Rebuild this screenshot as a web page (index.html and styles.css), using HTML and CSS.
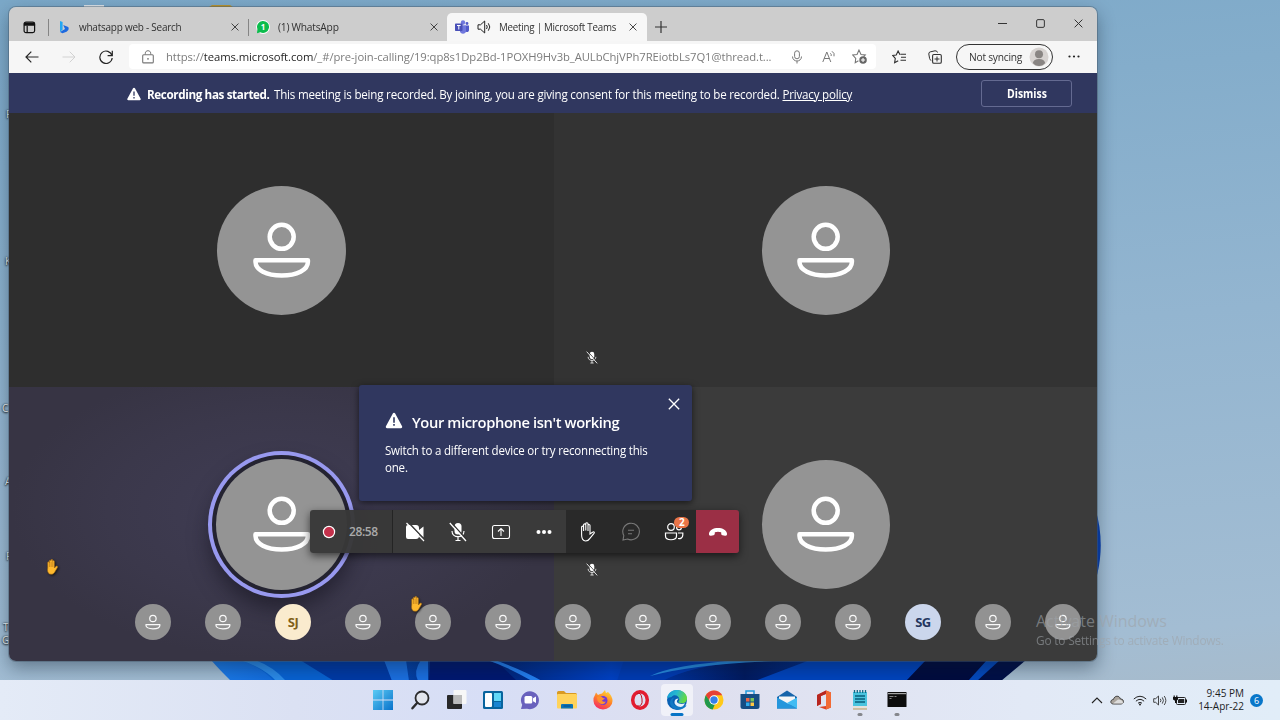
FILE: index.html
```html
<!DOCTYPE html>
<html lang="en">
<head>
<meta charset="utf-8">
<title>Meeting | Microsoft Teams</title>
<link rel="stylesheet" href="styles.css">
</head>
<body>
<svg class="defs" width="0" height="0" aria-hidden="true">
  <defs>
    <symbol id="person" viewBox="0 0 60 60"><g fill="none" stroke="#fff" stroke-width="4.500"><circle cx="29.700" cy="16.800" r="12"/><path d="M3.500 40.200H55.900V42C55.900 50 45 55.500 29.700 55.500S3.500 50 3.500 42Z" stroke-linejoin="round"/></g></symbol>
    <symbol id="warn" viewBox="0 0 16 16"><path fill="#fff" d="M8 .8c.5 0 .9.200 1.100.7l6.500 12c.4.800-.1 1.700-1.100 1.700h-13c-1 0-1.500-.9-1.100-1.700l6.500-12c.2-.5.600-.7 1.100-.7z"/><path d="M8 5v5M8 11.300v1.700" stroke="#30375f" stroke-width="1.500"/></symbol>
    <symbol id="close" viewBox="0 0 10 10"><path d="M.7.7l8.600 8.600M9.300.7L.7 9.300" fill="none" stroke="currentColor" stroke-width="1.100"/></symbol>
    <symbol id="mute" viewBox="0 0 18 20"><rect x="5.500" y="1" width="7" height="11.500" rx="3.500" fill="#fff"/><path d="M3 9c0 7.500 12 7.500 12 0M9 14.800V18.500M6.500 18.500h5" fill="none" stroke="#fff" stroke-width="1.200"/><path d="M1.800 0L18 18" stroke="#333" stroke-width="1.300"/><path d="M.8 1L17 19" stroke="#fff" stroke-width="1.300"/></symbol>
    <symbol id="hand" viewBox="0 0 14 16"><path d="M3.200 9V3.600c0-1.200 1.500-1.200 1.600 0V2c0-1.300 1.700-1.300 1.700 0V1.200c0-1.300 1.700-1.300 1.700 0V2.400c0-1.200 1.700-1.200 1.700 0V9l1.600-1.700c.9-.8 2.100.1 1.500 1.100L10.300 13c-1 1.700-2 2.300-3.700 2.300-2.500 0-3.600-1.900-3.600-4.500z" fill="#ffb92e" stroke="#9b6519" stroke-width=".6"/><path d="M4.900 3v5M6.600 2.600V8M8.300 3v5" stroke="#a96b15" stroke-width=".6"/></symbol>
    <linearGradient id="petal" x1="0" x2="1"><stop offset="0" stop-color="#1c7be8"/><stop offset=".17" stop-color="#0556cd"/><stop offset=".3" stop-color="#02216e"/><stop offset=".45" stop-color="#0041c4"/><stop offset=".6" stop-color="#021a5f"/><stop offset=".78" stop-color="#0145c2"/><stop offset="1" stop-color="#0a3fae"/></linearGradient>
    <linearGradient id="win" x2="1" y2="1"><stop stop-color="#5ccbf4"/><stop offset="1" stop-color="#0872cb"/></linearGradient>
    <linearGradient id="edgeg" x2="1" y2=".3"><stop stop-color="#1499d8"/><stop offset=".5" stop-color="#27b8cf"/><stop offset="1" stop-color="#62d947"/></linearGradient>
    <linearGradient id="fox" x1=".8" y1="0" x2=".3" y2="1"><stop stop-color="#ffe137"/><stop offset=".5" stop-color="#ff8428"/><stop offset="1" stop-color="#f52965"/></linearGradient>
  </defs>
</svg>

<main class="desktop">
  <svg class="wallpaper" viewBox="0 0 1280 720" aria-hidden="true">
    <path d="M211 660C217 667 224 674 231 681H1000L1024 661 1088 600C1105 565 1105 525 1088 490L600 400Z" fill="url(#petal)"/>
    <path d="M240 660C255 665 266 672 274 681h120L384 660Z" fill="#0862d2"/>
    <path d="M300 660h84l10 21h-60z" fill="#013aa6"/>
    <path d="M240 660q24 8 36 21h10q-12-14-31-21z" fill="#2b8bea"/>
    <path d="M384 660l8 21h17l-3-21zM421 660q-8 11-3 21h10v-21z" fill="#1b6fe0"/>
    <path d="M430 660h65l22 21h-88z" fill="#011870"/><path d="M495 660q30 11 47 21h-10q-24-14-45-21z" fill="#247ff1"/>
    <path d="M624 660h120v2q-50 3-82 19h-45z" fill="#003bb2"/><path d="M650 676q50-14 157-16h-66q-70 5-91 16z" fill="#278be0"/>
    <path d="M810 660l-55 21h150l20-21z" fill="#0144be"/><path d="M926 660l-20 21h68l14-21z" fill="#010b3e"/>
    <path d="M987 660l-19 21h9l23-21z" fill="#0449bd"/><path d="M1000 660l-23 21h24l25-21z" fill="#010f47"/>
    <path d="M84 5h20v5H84z" fill="#dce3e8"/><path d="M209 10V7l3-2h18l3 2v3z" fill="#b99431"/>
  </svg>
  <span class="label l1">F</span><span class="label l2">K</span><span class="label l3">C</span><span class="label l4">A</span><span class="label l5">F</span><span class="label l6">Tu</span><span class="label l7">G</span>

  <section class="window">
    <header class="tabs">
      <svg class="workspace" viewBox="0 0 14 14"><rect x="1.200" y="1.200" width="11.300" height="11.300" rx="2" fill="none" stroke="#111" stroke-width="1.300"/><path d="M1 2h12v3H1z" fill="#111"/><path d="M4.500 5v8" stroke="#111" stroke-width="1.300"/></svg>
      <i class="divider"></i>
      <div class="tab first">
        <svg class="favicon" viewBox="0 0 14 14"><path d="M3 1l2.600 1v7.600L3 12z" fill="#22a7f2"/><path d="M6.200 5l5 2c1.300 2-.2 4-2.300 5.100L5.500 13.300 3 12l5-3z" fill="#1d69df"/></svg>
        <span class="tab-title t1">whatsapp web - Search</span><svg class="x"><use href="#close"/></svg>
      </div>
      <i class="divider"></i>
      <div class="tab second">
        <svg class="favicon wa" viewBox="0 0 14 14"><circle cx="7" cy="7" r="6.900" fill="#fff"/><path d="M1 13.300L1.400 9a6 6 0 1 1 3 3.300z" fill="#0dbc4d"/><text x="7" y="10" text-anchor="middle" fill="#fff">1</text></svg>
        <span class="tab-title t2">(1) WhatsApp</span><svg class="x"><use href="#close"/></svg>
      </div>
      <div class="tab active">
        <svg class="favicon" viewBox="0 0 14 14"><circle cx="8" cy="2.500" r="2.200" fill="#7078dd"/><circle cx="12" cy="3.500" r="1.400" fill="#5059c9"/><path d="M5 5.200h6v6c0 3.300-6 3.300-6 0z" fill="#7078dd"/><path d="M11 5.600h3V10c0 2-2 2.500-3 1.800z" fill="#5059c9"/><rect y="3.500" width="7.500" height="7.500" rx=".7" fill="#4950b8"/><path d="M2 5.500h3.600M3.800 5.500v4" stroke="#fff"/></svg>
        <svg class="sound" viewBox="0 0 14 14"><path d="M1 4.800h2.500L7.700 1v12L3.500 9.200H1z" fill="none" stroke="#222"/><path d="M9.500 5q1.500 2 0 4M11.300 3.300q3 3.700 0 7.400" fill="none" stroke="#222"/></svg>
        <span class="tab-title t3">Meeting | Microsoft Teams</span><svg class="x"><use href="#close"/></svg>
      </div>
      <svg class="plus" viewBox="0 0 12 12"><path d="M6 0v12M0 6h12" stroke="#333" stroke-width="1.200"/></svg>
      <div class="window-actions">
        <svg viewBox="0 0 10 10"><path d="M0 5h10" stroke="#222"/></svg>
        <svg viewBox="0 0 10 10"><rect x=".7" y=".7" width="8.600" height="8.600" rx="1.400" fill="none" stroke="#222"/></svg>
        <svg><use href="#close"/></svg>
      </div>
    </header>

    <nav class="toolbar">
      <svg class="back" viewBox="0 0 14 12"><path d="M13.500 6H1M6.300.7L1 6l5.300 5.300" fill="none" stroke="#282828" stroke-width="1.200"/></svg>
      <svg class="forward" viewBox="0 0 14 12"><path d="M.5 6H13M7.700.7L13 6l-5.300 5.300" fill="none" stroke="#d2d2d2"/></svg>
      <svg class="reload" viewBox="0 0 14 14"><path d="M13 5.500A6.200 6.200 0 1 0 13.200 8M13.300 .8v4.800H8.600" fill="none" stroke="#252525" stroke-width="1.200"/></svg>
      <div class="address">
        <svg class="lock" viewBox="0 0 12 14"><rect x=".7" y="4.700" width="10.600" height="8.200" rx="1" fill="none" stroke="#777" stroke-width="1.100"/><path d="M3.300 4.500V3.200c0-3.300 5.400-3.300 5.400 0v1.300" fill="none" stroke="#777"/><circle cx="6" cy="8.800" r=".9" fill="#777"/></svg>
        <span class="url">https://<b>teams.microsoft.com</b>/_#/pre-join-calling/19:qp8s1Dp2Bd-1POXH9Hv3b_AULbChjVPh7REiotbLs7Q1@thread.t...</span>
        <svg class="mic" viewBox="0 0 12 14"><rect x="3.600" y=".8" width="4.800" height="8" rx="2.400" fill="none" stroke="#777"/><path d="M1.500 6.500c0 6 9 6 9 0M6 11v2.500" fill="none" stroke="#777"/></svg>
        <svg class="read" viewBox="0 0 14 14"><path d="M.8 12L4.800 2l4 10M2.200 8.500h5.200M8.400 3.300q1.300 1 .7 2.700M10 1.300q3 1.900 2 5" fill="none" stroke="#777"/></svg>
        <svg class="favorite" viewBox="0 0 14 14"><path d="M6 11l-3 1.800.5-4L.7 5.600l4-.5L6.500 1l1.900 4.100 4 .5-1.500 1.500" fill="none" stroke="#777"/><circle cx="10.300" cy="10.200" r="3.500" fill="#666"/><path d="M8.400 10.200h3.800M10.300 8.300v3.800" stroke="#fff"/></svg>
      </div>
      <svg class="starlist" viewBox="0 0 14 14"><path d="M8 4.800L6.100 1 4.200 5l-3.500.4 2.600 3-.7 4.400 3.600-2M8.500 4.300H14M9 7.300h5M8.500 10.300H14" fill="none" stroke="#303030" stroke-width="1.100"/></svg>
      <svg class="collections" viewBox="0 0 14 14"><rect x="4.600" y="4.500" width="8.700" height="8.700" rx="1.300" fill="none" stroke="#303030" stroke-width="1.100"/><path d="M9 6.500v5M6.500 9h5M3.300 10.500Q1.800 10 1.600 8.500L.8 4Q.6 2.300 2.200 1.900L7 .8Q9 .5 9.500 2.500" fill="none" stroke="#303030"/></svg>
      <div class="profile"><span>Not syncing</span><svg viewBox="0 0 20 20"><circle cx="10" cy="10" r="9.500" fill="#d7d3d1"/><circle cx="10" cy="7.300" r="4" fill="#898583"/><path d="M3.800 16q1-4 6.200-4t6.200 4q-2.300 3-6.200 3t-6.200-3z" fill="#898583"/></svg></div>
      <svg class="more" viewBox="0 0 12 3"><g fill="#222"><circle cx="1.500" cy="1.500" r="1.100"/><circle cx="6" cy="1.500" r="1.100"/><circle cx="10.500" cy="1.500" r="1.100"/></g></svg>
    </nav>

    <div class="banner"><svg class="warning"><use href="#warn"/></svg><p><strong>Recording has started.</strong><span class="notice">This meeting is being recorded. By joining, you are giving consent for this meeting to be recorded. <u>Privacy policy</u></span></p><button class="dismiss"><span>Dismiss</span></button></div>

    <div class="stage">
      <div class="tile dark"><div class="avatar"><svg><use href="#person"/></svg></div></div>
      <div class="tile upper"><div class="avatar"><svg><use href="#person"/></svg></div><svg class="tile-muted"><use href="#mute"/></svg></div>
      <div class="tile speaking"><div class="avatar ring"><svg><use href="#person"/></svg></div><svg class="raised"><use href="#hand"/></svg></div>
      <div class="tile gray"><div class="avatar"><svg><use href="#person"/></svg></div><svg class="tile-muted lower"><use href="#mute"/></svg></div>
      <div class="participants">
        <div class="mini"><svg><use href="#person"/></svg></div><div class="mini"><svg><use href="#person"/></svg></div><div class="mini cream">SJ</div><div class="mini"><svg><use href="#person"/></svg></div><div class="mini"><svg><use href="#person"/></svg><svg class="mini-hand"><use href="#hand"/></svg></div><div class="mini"><svg><use href="#person"/></svg></div><div class="mini"><svg><use href="#person"/></svg></div><div class="mini"><svg><use href="#person"/></svg></div><div class="mini"><svg><use href="#person"/></svg></div><div class="mini"><svg><use href="#person"/></svg></div><div class="mini"><svg><use href="#person"/></svg></div><div class="mini blue">SG</div><div class="mini"><svg><use href="#person"/></svg></div><div class="mini"><svg><use href="#person"/></svg></div>
      </div>
      <aside class="popup"><div class="popup-head"><svg class="warning"><use href="#warn"/></svg><h1>Your microphone isn't working</h1></div><p><span>Switch to a different device or try reconnecting this</span><br>one.</p><svg class="popup-close"><use href="#close"/></svg></aside>
      <div class="callbar">
        <div class="recording"><svg viewBox="0 0 14 14"><circle cx="7" cy="7" r="5.600" fill="#c4314b" stroke="#fff" stroke-width="1.200"/></svg><span>28:58</span></div>
        <div class="devices">
          <svg viewBox="0 0 20 20"><path d="M3 3h8a3 3 0 0 1 3 3v2l4.500-3.500v11L14 12v2a3 3 0 0 1-3 3H3a2 2 0 0 1-2-2V5a2 2 0 0 1 2-2z" fill="#fff"/><path d="M3 0l17 18" stroke="#3b3b3b" stroke-width="1.500"/><path d="M1.500 1l17.500 18" stroke="#fff" stroke-width="1.200"/></svg>
          <svg><use href="#mute"/></svg>
          <svg viewBox="0 0 20 20"><rect x="1.500" y="3.500" width="17" height="13" rx="2" fill="none" stroke="#fff" stroke-width="1.100"/><path d="M10 14V6.500M7 9.500l3-3 3 3" fill="none" stroke="#fff" stroke-width="1.100"/></svg>
          <svg viewBox="0 0 20 20"><g fill="#fff"><circle cx="4.500" cy="10" r="2"/><circle cx="10" cy="10" r="2"/><circle cx="15.500" cy="10" r="2"/></g></svg>
        </div>
        <div class="social">
          <svg class="raise" viewBox="0 0 20 20"><path d="M3.600 11V5.200c0-1.500 2-1.500 2 0V9 3c0-1.500 2.200-1.500 2.200 0v5.500-6.700c0-1.500 2.200-1.500 2.200 0V9 3.600c0-1.500 2-1.500 2 0V12l2.500-1.800c1-.8 2.500-.2 1.500 1.200l-4.300 5.200c-1.200 2-2.300 2.400-4 2.400-3 0-4.100-3-4.100-6z" fill="none" stroke="#fff" stroke-width="1.100"/></svg>
          <svg viewBox="0 0 20 20"><path d="M2 18l.8-4.500A8.300 8.300 0 1 1 6.500 17zM7 8.300h6M7 11.700h4" fill="none" stroke="#777" stroke-width="1.100"/></svg>
          <div class="people"><svg viewBox="0 0 20 20"><g fill="none" stroke="#fff" stroke-width="1.200"><circle cx="7" cy="5" r="3.300"/><circle cx="15" cy="5.500" r="2.400"/><path d="M1.500 11h11v3c0 5-11 5-11 0zM14 11h4.800v2c0 3.200-2.600 4-4.800 3.500"/></g></svg><b>2</b></div>
        </div>
        <div class="leave"><svg viewBox="0 0 20 20"><path d="M1 11.500C1.500 8 5.500 6 10 6s8.500 2 9 5.500c.2 1.700-.6 2.500-2 2.200l-2.500-.5c-.9-.2-1.300-.8-1.300-2V10.300q-3.200-1-6.400 0v1c0 1.200-.4 1.700-1.300 1.900l-2.500.5c-1.400.3-2.200-.6-2-2.200z" fill="#fff"/></svg></div>
      </div>
    </div>
  </section>

  <div class="activation"><div>Activate Windows</div><p>Go to Settings to activate Windows.</p></div>

  <footer class="taskbar">
    <div class="apps">
      <div class="app"><svg viewBox="0 0 20 20"><path d="M0 0h9.600v9.600H0zM10.400 0H20v9.600h-9.600zM0 10.400h9.600V20H0zM10.400 10.400H20V20h-9.600z" fill="url(#win)"/></svg></div>
      <div class="app"><svg viewBox="0 0 20 20"><circle cx="12" cy="8" r="6.500" fill="#e3e6ee" stroke="#2b2b2d" stroke-width="1.800"/><path d="M7.300 12.800L2.400 18.300" stroke="#2b2b2d" stroke-width="2.400" stroke-linecap="round"/></svg></div>
      <div class="app"><svg viewBox="0 0 20 20"><rect x="0" y="5" width="15" height="14" rx="1" fill="#282828"/><rect x="6.500" y="0" width="13" height="14" rx="1" fill="#f7f7f7"/><path d="M6.500 5H15v9H6.500z" fill="#bbb"/></svg></div>
      <div class="app"><svg viewBox="0 0 20 20"><rect y="1" width="20" height="18" rx="1.500" fill="#08649e"/><rect x="2" y="3" width="7" height="14" rx="1" fill="#fff"/><path d="M11 3h7v8h-7z" fill="#61d7f7"/><path d="M11 12h7v5h-7z" fill="#1884d1"/></svg></div>
      <div class="app"><svg viewBox="0 0 20 20"><path d="M1 19l1.200-4.200A9 9 0 1 1 7 18.700z" fill="#6961bd"/><rect x="4.500" y="6" width="7.800" height="7.500" rx="1.500" fill="#fff"/><path d="M13 8.200l3-1.700v6.500l-3-1.700z" fill="#fff"/></svg></div>
      <div class="app"><svg viewBox="0 0 20 20"><path d="M0 2.500Q0 1 1.500 1H7l2 2h9.500Q20 3 20 4.500V8H0z" fill="#d99a22"/><rect y="4" width="20" height="14.500" rx="1" fill="#ffd35b"/><path d="M4 18.500V15q0-1 1-1h10q1 0 1 1v3.500z" fill="#0b73b5"/><path d="M6.500 16h7" stroke="#064e86"/></svg></div>
      <div class="app"><svg viewBox="0 0 20 20"><path d="M2 5L3 2.500 5 5q2-1.500 4-1.500L12 0l1 3 2-1q4.500 4 4.500 9A9.500 8.500 0 0 1 .5 11Q.3 7 2 5z" fill="url(#fox)"/><circle cx="10" cy="10.500" r="4.500" fill="#743bd5"/><path d="M4 7q4-2 6 1l2 .5-3 2q1 2 4 1-2 4-6 2-3-2-3-6.500z" fill="#ff912d"/></svg></div>
      <div class="app"><svg viewBox="0 0 20 20"><ellipse cx="10" cy="10" rx="7.300" ry="8.200" fill="none" stroke="#e21c30" stroke-width="3.500"/><path d="M7 4q4-3 5 5t-5 7" fill="none" stroke="#bc1423" stroke-width="1"/></svg></div>
      <div class="app selected"><svg viewBox="0 0 20 20"><circle cx="10" cy="10" r="10" fill="#0961b4"/><path d="M0 8C2-3 19-2 20 8c.3 4-3 6-7 5-2-.3-2-1-1-2C14 6 7 3 4.500 7z" fill="url(#edgeg)"/><path d="M7.500 7.500c-5 4 1 12 9.500 8.200q2-1 2.500 0C16 20 10 21 6 18 1 14 3 8 7.500 7.500z" fill="#1379c5"/><path d="M11.500 8.500Q8 12 12 13.500q3 1 6-.3-2 5-7 3.200Q6 14.500 8 10q1-1.600 3.500-1.500z" fill="#e7f2fb"/></svg><i></i></div>
      <div class="app"><svg viewBox="0 0 20 20"><circle cx="10" cy="10" r="9.500" fill="#ffc919"/><path d="M1.800 5.200A9.500 9.500 0 0 1 18.200 5.200H10L6 12z" fill="#e64035"/><path d="M1.800 5.200L7 13l4 1-2.300 5.400A9.500 9.500 0 0 1 1.800 5.200z" fill="#21984c"/><circle cx="10" cy="10" r="4.700" fill="#fff"/><circle cx="10" cy="10" r="3.700" fill="#367fe7"/></svg></div>
      <div class="app"><svg viewBox="0 0 20 20"><path d="M6 5V1h8v4" fill="none" stroke="#2599dc" stroke-width="1.500"/><path d="M.5 4h19v12.500q0 2.500-2.500 2.500H3q-2.500 0-2.500-2.500z" fill="#164d83"/><path d="M6 8h3.500v3.500H6z" fill="#ec6548"/><path d="M10.500 8H14v3.500h-3.500z" fill="#7ac356"/><path d="M6 12.500h3.500V16H6z" fill="#31aceb"/><path d="M10.500 12.500H14V16h-3.500z" fill="#ffc843"/></svg></div>
      <div class="app"><svg viewBox="0 0 20 20"><path d="M0 7L10 .5 20 7v11.500H0z" fill="#1765aa"/><path d="M2 6.500h16v5l-8 4-8-4z" fill="#f6f6f6"/><path d="M0 7.500l20 11H0z" fill="#2496dc"/><path d="M20 7.500L10 13l10 5.500z" fill="#42bcf3"/></svg></div>
      <div class="app"><svg viewBox="0 0 20 20"><path d="M3 5L12 .5l5 2v15l-5 2L5 17l7-1V4L7 6v8l-4 2z" fill="#dc4326"/><path d="M12 .5l5 2v15l-5 2z" fill="#f26a34"/><path d="M3 5l9-4.500V4L7 6v8l-4 2z" fill="#b72620"/></svg></div>
      <div class="app"><svg viewBox="0 0 20 20"><path d="M3 2h14v16.500H3z" fill="#49c4df"/><path d="M3 16h14v3H3z" fill="#e3e2dc"/><path d="M5 6h10M5 9h10M5 12h10" stroke="#075d7c" stroke-width="1.300"/><path d="M4.500 0v3M7.300 0v3M10 0v3M12.700 0v3M15.500 0v3" stroke="#116b87" stroke-width="1.300"/><path d="M3 19h14" stroke="#b59b62"/></svg><i></i></div>
      <div class="app"><svg viewBox="0 0 20 20"><rect x=".5" y="2" width="19" height="15" rx=".5" fill="#0d0d0d"/><path d="M1 3h18v1.200H1z" fill="#a4a4a4"/><path d="M2.500 6.500h4M7.500 6.500h2M2.500 8.500h2" stroke="#888" fill="none"/></svg><i></i></div>
    </div>
    <div class="tray">
      <svg class="chevron" viewBox="0 0 12 7"><path d="M1 6l5-5 5 5" fill="none" stroke="#222" stroke-width="1.100"/></svg>
      <svg class="cloud" viewBox="0 0 14 10"><path d="M3.500 9C-.3 9 .2 4.500 3.400 4.500 4.500.2 9.500.2 10.400 4c4-.3 4 5 .6 5z" fill="#aaa49d" stroke="#333" stroke-width=".9"/><path d="M3 8.500l5-4q5 0 5 4z" fill="#ddd"/></svg>
      <svg class="wifi" viewBox="0 0 14 11"><path d="M.8 4q6.200-5.500 12.400 0M2.900 6.200q4.100-3.700 8.200 0M5 8.200q2-1.600 4 0" fill="none" stroke="#222"/><circle cx="7" cy="9.600" r="1" fill="#222"/></svg>
      <svg class="volume" viewBox="0 0 14 11"><path d="M.7 3.700h2L5.500 1v9L2.700 7.300h-2zM7.300 3.800q1.300 1.700 0 3.400M9.300 2.400q2.300 3.100 0 6.200M11.200 1q3.300 4.500 0 9" fill="none" stroke="#333" stroke-width=".9"/></svg>
      <svg class="battery" viewBox="0 0 14 11"><rect x="3.500" y="2.500" width="9" height="7" rx="1" fill="none" stroke="#222"/><path d="M6 4h5.200v4H5V5z" fill="#222"/><path d="M0 2h5v2.500L3.300 5.800V8H2V5.800L0 4.500zM.6.500h1.200V2H.6zM3.200.5h1.200V2H3.200zM13 4.500h1v3h-1z" fill="#111"/></svg>
      <div class="clock"><time>9:45 PM</time><time>14-Apr-22</time></div><span class="notification">6</span>
    </div>
  </footer>
</main>
</body>
</html>
```
FILE: styles.css
```css
* { box-sizing: border-box; }
body { margin: 0; font-family: "Open Sans", "Noto Sans", sans-serif; font-size: 11px; overflow: hidden; }
svg { display: block; flex-shrink: 0; }
p, h1 { margin: 0; }
button { font: inherit; padding: 0; }
.defs { position: absolute; }
.desktop { position: relative; width: 1280px; height: 720px; padding: 7px 0 0 9px; overflow: hidden; background: linear-gradient(175deg, #7ba8c8 0%, #84adcb 20%, #93b5d0 50%, #a3bdd3 88%, #a9bac8 100%); }
.wallpaper { position: absolute; inset: 0; width: 1280px; height: 720px; }
.label { position: absolute; left: 6px; color: #eef3f6; font-size: 10px; line-height: 14px; text-shadow: 0 1px 2px #111, 0 0 2px #222; }
.l1 { top: 107px; } .l2 { top: 254px; left: 5px; } .l3 { top: 401px; left: 2px; } .l4 { top: 474px; left: 5px; } .l5 { top: 549px; } .l6 { top: 620px; left: 3px; } .l7 { top: 633px; left: 2px; }
.window { position: relative; display: flex; flex-direction: column; width: 1088px; height: 654px; border-radius: 7px; overflow: hidden; box-shadow: 0 0 0 1px rgba(70, 90, 108, .45), 0 7px 18px rgba(10, 25, 40, .4); }

.tabs { height: 34px; flex: none; display: flex; align-items: center; background: #cdcdcd; padding: 6px 14px 0; color: #303030; }
.workspace { width: 13px; height: 13px; }
.divider { flex: none; width: 1px; height: 17px; background: #858585; margin-left: 12px; }
.tab { display: flex; flex: none; align-items: center; height: 28px; }
.first { width: 199px; padding-left: 8px; }
.second { width: 198px; padding-left: 7px; }
.first + .divider { margin-left: 0; }
.active { width: 200px; padding-left: 8px; border-radius: 5px 5px 0 0; background: #f7f7f7; }
.favicon { width: 14px; height: 14px; }
.favicon text { font: 700 8px "Open Sans", sans-serif; }
.tab-title { flex: none; white-space: nowrap; margin: -1px 0 0 8px; transform-origin: left; letter-spacing: -.25px; }
.sound { width: 14px; height: 14px; margin-left: 8px; }
.active .tab-title { width: 118px; margin-left: 8px; }
.x { width: 8px; height: 8px; margin-left: auto; margin-right: 9px; }
.active .x { margin-right: 10px; }
.t1 { transform: scaleX(.905); } .t2 { transform: scaleX(.93); } .t3 { transform: scaleX(.885); }
.plus { width: 12px; height: 12px; margin-left: 8px; }
.window-actions { display: flex; gap: 29px; margin: -8px 0 0 auto; }
.window-actions svg { width: 9px; height: 9px; }

.toolbar { height: 32px; flex: none; display: flex; align-items: center; padding: 0 16px 1px; background: #f6f6f6; }
.back, .forward, .reload { width: 14px; height: 14px; }
.forward { margin-left: 23px; } .reload { margin-left: 23px; }
.address { display: flex; align-items: center; width: 747px; height: 25px; margin-left: 16px; padding: 0 9px 0 13px; background: #fff; border-radius: 4px; }
.lock { width: 12px; height: 14px; }
.url { flex: none; width: 608px; margin-left: 12px; color: #7c7c7c; font-size: 11.500px; letter-spacing: -.08px; white-space: nowrap; transform: scaleX(.98); transform-origin: left; }
.url b { color: #262626; font-weight: 400; }
.mic { width: 12px; height: 14px; margin-left: 17px; } .read { width: 14px; height: 14px; margin-left: 19px; } .favorite { width: 15px; height: 15px; margin-left: 16px; }
.starlist { width: 14px; height: 14px; margin-left: 16px; } .collections { width: 14px; height: 14px; margin-left: 22px; }
.profile { flex: none; width: 97px; height: 26px; margin-left: 14px; border: 1px solid #333; border-radius: 14px; display: flex; align-items: center; justify-content: space-between; padding: 0 3px 0 12px; color: #333; letter-spacing: -.25px; }
.profile span { white-space: nowrap; transform: scaleX(.93); transform-origin: left; }
.profile svg { width: 20px; height: 20px; }
.more { width: 12px; height: 3px; margin-left: 15px; }

.banner { height: 40px; flex: none; display: flex; align-items: center; padding: 2px 26px 0 118px; background: #30375f; color: #fff; font-size: 12px; }
.banner .warning { width: 14px; height: 14px; margin: -1px 6px 0 0; }
.banner p { white-space: nowrap; letter-spacing: -.2px; }
.banner strong { display: inline-block; width: 127px; font-weight: 700; letter-spacing: -.4px; transform: scaleX(.975); transform-origin: left; }
.notice { display: inline-block; transform: scaleX(.964); transform-origin: left; }
.dismiss { width: 91px; height: 27px; margin: -1px -1px 0 auto; border: 1px solid #646a91; border-radius: 3px; background: transparent; color: #fff; font-weight: 700; font-size: 12px; }
.dismiss span { display: inline-block; transform: scaleX(.87); }

.stage { position: relative; flex: 1; display: grid; grid-template: 274px 1fr / 545px 1fr; }
.tile { position: relative; display: flex; align-items: center; justify-content: center; }
.dark { background: #2e2e2e; } .upper { background: #333; } .gray { background: #3b3b3b; }
.speaking { background: radial-gradient(ellipse at 50% 45%, #403d55, #3b384b 45%, #373444 70%); }
.avatar { width: 129px; height: 129px; border-radius: 50%; display: flex; align-items: center; justify-content: center; background: #949494; }
.upper .avatar, .gray .avatar { width: 128px; margin-left: 1px; }
.avatar svg { width: 60px; height: 60px; }
.speaking .ring { width: 131px; height: 131px; box-shadow: 0 0 0 4px #242331, 0 0 0 8px #9899ef, 0 12px 20px 7px rgba(18, 17, 28, .55); }
.tile-muted { position: absolute; width: 12px; height: 13px; left: 32px; bottom: 23px; } .tile-muted.lower { bottom: 85px; }
.raised { position: absolute; left: 35px; bottom: 86px; width: 15px; height: 16px; filter: drop-shadow(1px 1px 1px #161616); }
.participants { position: absolute; left: 126px; bottom: 21px; display: flex; gap: 34px; }
.mini { position: relative; width: 36px; height: 36px; border-radius: 50%; display: grid; place-items: center; background: #929292; font-size: 13px; font-weight: 700; letter-spacing: -.5px; }
.mini > svg { width: 16px; height: 16px; opacity: .95; }
.mini .mini-hand { position: absolute; left: -7px; top: -8px; width: 15px; height: 16px; opacity: 1; filter: drop-shadow(1px 1px 1px #222); }
.cream { color: #806018; background: #faebce; } .blue { color: #24365f; background: #cbd6ec; }
.popup { position: absolute; left: 350px; top: 272px; width: 333px; height: 116px; padding: 27px 26px; background: #30375f; border-radius: 3px; color: #fff; box-shadow: 0 2px 7px rgba(0, 0, 0, .6); }
.popup-head { display: flex; align-items: center; gap: 9px; height: 20px; }
.popup .warning { width: 18px; height: 17px; margin-bottom: 3px; }
.popup h1 { font-size: 15px; line-height: 20px; font-weight: 600; letter-spacing: -.38px; white-space: nowrap; transform: scaleX(.98); transform-origin: left; }
.popup p { margin-top: 10px; font-size: 12px; line-height: 17px; letter-spacing: -.2px; white-space: nowrap; transform: scaleX(.96); transform-origin: left; }
.popup-close { position: absolute; right: 12px; top: 13px; width: 12px; height: 12px; }
.callbar { position: absolute; left: 301px; top: 397px; width: 429px; height: 43px; display: flex; overflow: hidden; border-radius: 3px; box-shadow: 0 3px 9px rgba(0, 0, 0, .6); }
.recording { width: 83px; display: flex; align-items: center; gap: 13px; padding-left: 12px; color: #aaa; background: rgba(56, 56, 56, .97); border-right: 1px solid #242424; font-size: 12px; font-weight: 600; letter-spacing: -.4px; }
.devices, .social { display: grid; align-items: center; justify-items: center; background: #3a3a3a; }
.devices { width: 173px; grid-template-columns: repeat(4, 1fr); } .social { width: 130px; grid-template-columns: repeat(3, 1fr); background: #292929; }
.callbar svg { width: 20px; height: 20px; }
.callbar .recording svg { width: 14px; height: 14px; }
.people { position: relative; } .people b { position: absolute; top: -5px; right: -5px; width: 15px; height: 11px; background: #e97548; border-radius: 6px; color: white; font-size: 10px; line-height: 11px; text-align: center; }
.leave { width: 43px; display: grid; place-items: center; background: #9b2f45; }

.activation { position: absolute; left: 1036px; top: 610px; color: rgba(158, 163, 168, .6); white-space: nowrap; font-size: 16px; line-height: 22px; letter-spacing: -.03px; }
.activation p { font-size: 12px; line-height: 17px; letter-spacing: -.2px; transform: scaleX(.99); transform-origin: left; }
.taskbar { position: absolute; inset: 680px 0 0; height: 40px; display: flex; justify-content: space-between; background: linear-gradient(90deg, #e4ebf7, #dbe1f3 23%, #d7def6 38%, #dfe0ef 56%, #e2e9f6 80%, #e1edf8); }
.apps { display: grid; grid-template-columns: repeat(15, 36.700px); margin-left: 365px; }
.app { position: relative; display: grid; place-items: center; }
.app svg { width: 20px; height: 20px; }
.selected { background: rgba(255, 255, 255, .55); border-radius: 4px; margin: 4px 2px; }
.app i { position: absolute; bottom: 4px; left: 50%; transform: translateX(-50%); width: 5px; height: 3px; border-radius: 2px; background: #85878c; }
.selected i { bottom: 0; width: 13px; background: #0874c6; }
.tray { display: flex; align-items: center; padding-right: 17px; color: #1d1d1d; }
.chevron { width: 12px; height: 7px; margin-right: 7px; } .cloud { width: 14px; height: 10px; margin-right: 9px; }
.wifi { width: 14px; height: 11px; margin-right: 6px; } .volume { width: 14px; height: 11px; margin-right: 6px; } .battery { width: 14px; height: 11px; }
.clock { width: 57px; display: flex; flex-direction: column; text-align: right; font-size: 10px; line-height: 13px; letter-spacing: 0; }
.notification { width: 13px; height: 13px; margin-left: 6px; border-radius: 50%; background: #0876c9; color: #fff; text-align: center; font-size: 9px; line-height: 13px; }
```
